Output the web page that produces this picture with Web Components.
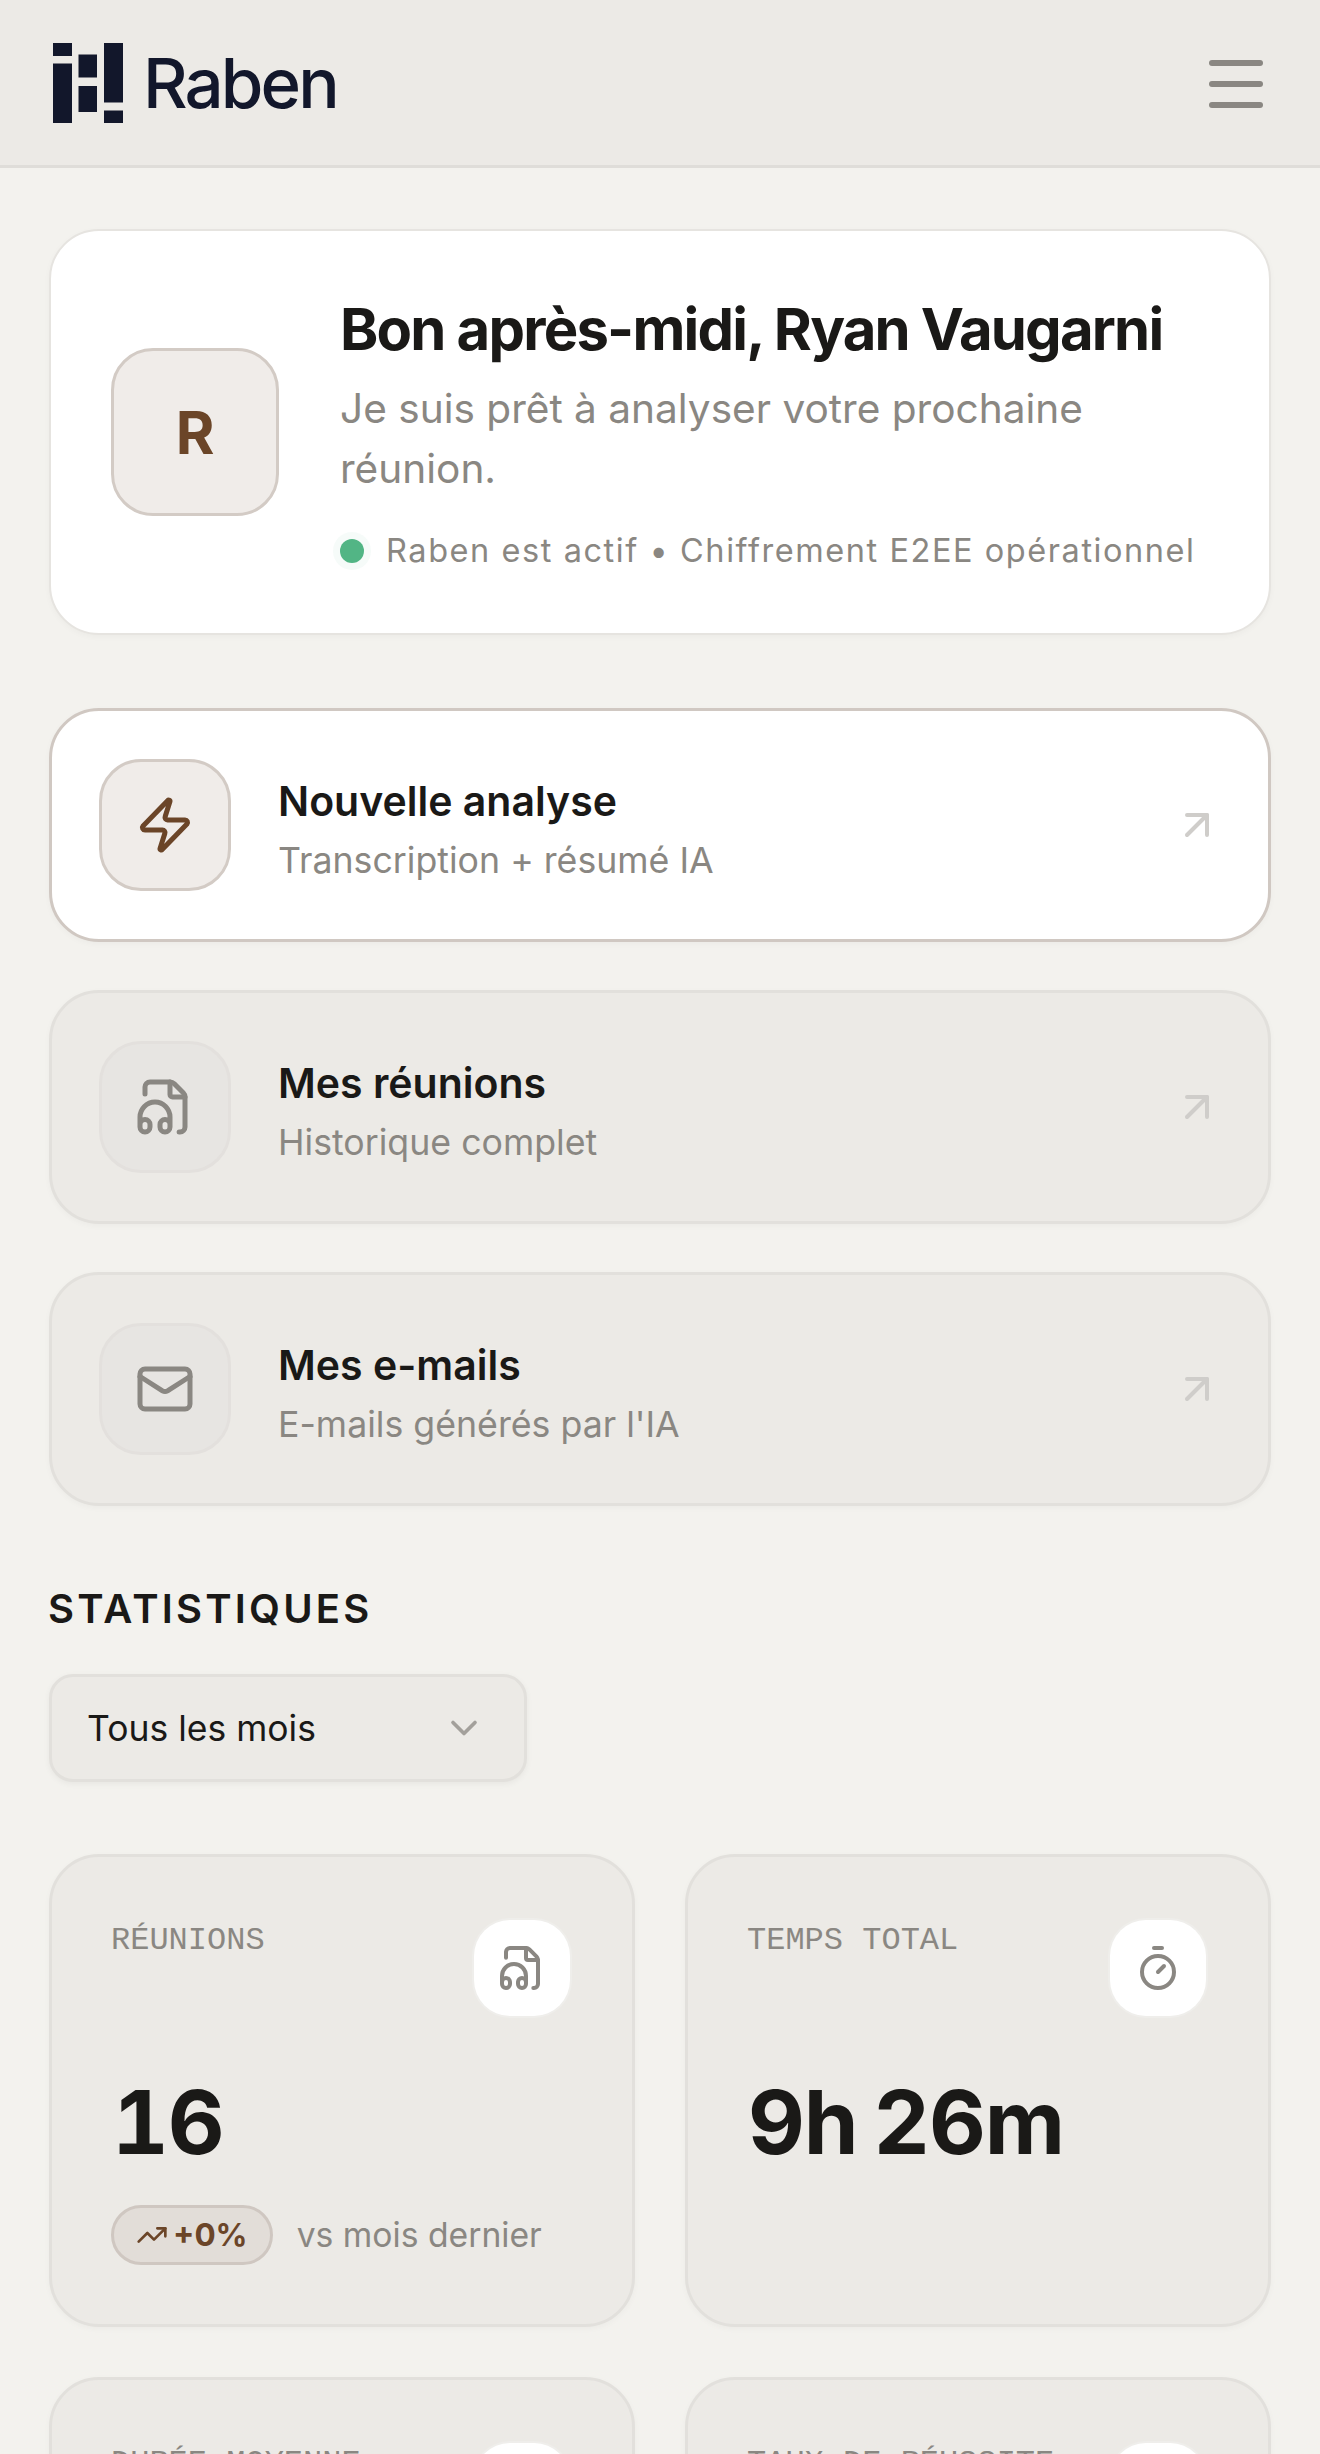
<!DOCTYPE html>
<html lang="fr">
<head>
<meta charset="utf-8">
<title>Raben</title>
<style>
html,body{margin:0;padding:0;height:2454px;overflow:hidden;background:#F3F2EE}
body{font-family:Inter,"Noto Sans",sans-serif;color:#1A1917}
</style>
</head>
<body>
<raben-app>
  <raben-header></raben-header>
  <raben-main>
    <hero-card initial="R">
      <span slot="title">Bon après-midi, Ryan Vaugarni</span>
      <span slot="sub">Je suis prêt à analyser votre prochaine réunion.</span>
      <span slot="status">Raben est actif • Chiffrement E2EE opérationnel</span>
    </hero-card>
    <action-list>
      <action-card primary icon="zap"><span slot="title">Nouvelle analyse</span><span slot="sub">Transcription + résumé IA</span></action-card>
      <action-card icon="file"><span slot="title">Mes réunions</span><span slot="sub">Historique complet</span></action-card>
      <action-card icon="mail"><span slot="title">Mes e-mails</span><span slot="sub">E-mails générés par l'IA</span></action-card>
    </action-list>
    <stat-section>
      <span slot="heading">STATISTIQUES</span>
      <span slot="select">Tous les mois</span>
      <stat-card icon="file" label="RÉUNIONS" value="16" trend="+0%" note="vs mois dernier"></stat-card>
      <stat-card icon="timer" label="TEMPS TOTAL" value="9h 26m"></stat-card>
      <stat-card icon="timer" label="DURÉE MOYENNE"></stat-card>
      <stat-card icon="trend" label="TAUX DE RÉUSSITE"></stat-card>
    </stat-section>
  </raben-main>
</raben-app>
<script>
const ICONS={
  zap:'<path d="M4 14a1 1 0 0 1-.78-1.63l9.9-10.2a.5.5 0 0 1 .86.46l-1.92 6.02A1 1 0 0 0 13 10h7a1 1 0 0 1 .78 1.63l-9.9 10.2a.5.5 0 0 1-.86-.46l1.92-6.02A1 1 0 0 0 11 14z"/>',
  file:'<path d="M4 6.835V4a2 2 0 0 1 2-2h8a2.4 2.4 0 0 1 1.706.706l3.588 3.588A2.4 2.4 0 0 1 20 8v12a2 2 0 0 1-2 2h-.343"/><path d="M14 2v5a1 1 0 0 0 1 1h5"/><path d="M2 19a2 2 0 0 1 4 0v1a2 2 0 0 1-4 0v-4a6 6 0 0 1 12 0v4a2 2 0 0 1-4 0v-1a2 2 0 0 1 4 0"/>',
  mail:'<path d="m22 7-8.991 5.727a2 2 0 0 1-2.009 0L2 7"/><rect x="2" y="4" width="20" height="16" rx="2"/>',
  timer:'<line x1="10" x2="14" y1="2" y2="2"/><line x1="12" x2="15" y1="14" y2="11"/><circle cx="12" cy="14" r="8"/>',
  arrow:'<path d="M7 7h10v10"/><path d="M7 17 17 7"/>',
  chevron:'<path d="m6 9 6 6 6-6"/>',
  trend:'<path d="M16 7h6v6"/><path d="m22 7-8.5 8.5-5-5L2 17"/>'
};
const svg=(n,s)=>`<svg xmlns="http://www.w3.org/2000/svg" width="${s}" height="${s}" viewBox="0 0 24 24" fill="none" stroke="currentColor" stroke-width="2" stroke-linecap="round" stroke-linejoin="round">${ICONS[n]}</svg>`;
function def(name,html){
  customElements.define(name,class extends HTMLElement{
    constructor(){super();this.attachShadow({mode:'open'}).innerHTML=typeof html==='function'?html(this):html;}
  });
}
def('raben-app',`<style>:host{display:block;width:1320px;height:2454px;overflow:hidden}</style><slot></slot>`);
def('raben-header',`<style>
:host{display:flex;align-items:center;justify-content:space-between;box-sizing:border-box;height:168px;background:#ECEAE6;border-bottom:3px solid #DFDDD9;padding:0 57px 0 53px}
.logo{display:flex;align-items:center;gap:20px}
.mark{display:block}
.word{font:450 69px/80px Inter,sans-serif;color:#12172B;letter-spacing:-.042em}
.burger{display:flex;flex-direction:column;gap:15px;width:54px;margin-top:3px}
.burger i{display:block;height:6px;border-radius:3px;background:#8A8782}
</style>
<div class="logo">
<svg class="mark" width="70" height="80" viewBox="0 0 70 80" fill="#12172B"><rect x="0" y="0" width="19" height="13"/><rect x="0" y="20.500" width="19" height="59.500"/><rect x="25.500" y="11.500" width="18.500" height="23"/><rect x="25.500" y="43" width="18.500" height="26"/><rect x="51" y="0" width="19" height="59.500"/><rect x="51" y="67.500" width="19" height="12.500"/></svg>
<span class="word">Raben</span></div>
<div class="burger"><i></i><i></i><i></i></div>`);
def('raben-main',`<style>:host{display:block;padding:61px 49px 0}</style><slot></slot>`);
def('hero-card',el=>`<style>
:host{display:flex;align-items:center;gap:61px;background:#fff;border:2px solid #E6E4E0;border-radius:50px;padding:57px 60px 52px;box-shadow:0 2px 6px rgba(0,0,0,.03);box-sizing:border-box;height:406px}
.av{flex:none;box-sizing:border-box;width:168px;height:168px;margin-top:-5px;border-radius:42px;background:#F0ECE9;border:3px solid #D3CBC5;color:#6B4528;display:flex;align-items:center;justify-content:center;font:700 59px/1 Inter,sans-serif}
.body{min-width:0}
.t{font:700 58px/70px Inter,sans-serif;letter-spacing:-.031em;color:#1A1917;white-space:nowrap}
.s{font:400 40.6px/60px Inter,sans-serif;color:#8A8782;margin-top:14.500px}
.st{display:flex;align-items:center;gap:22px;margin-top:28.500px;font:400 32.500px/48px Inter,sans-serif;letter-spacing:.048em;color:#8A8782;white-space:nowrap}
.d{flex:none;width:24px;height:24px;border-radius:50%;background:#52B585;box-shadow:0 0 0 7px rgba(82,181,133,.05)}
</style>
<div class="av">${el.getAttribute('initial')}</div>
<div class="body"><div class="t"><slot name="title"></slot></div><div class="s"><slot name="sub"></slot></div><div class="st"><span class="d"></span><slot name="status"></slot></div></div>`);
def('action-list',`<style>:host{display:flex;flex-direction:column;gap:48px;margin-top:73px}</style><slot></slot>`);
def('action-card',el=>{const p=el.hasAttribute('primary');return `<style>
:host{display:flex;align-items:center;box-sizing:border-box;height:234px;border-radius:50px;padding:0 47px 0 47px;
 background:${p?'#fff':'#ECEAE6'};border:3px solid ${p?'#D0C8C2':'#E2E0DC'};box-shadow:0 2px 6px rgba(0,0,0,.03)}
.i{flex:none;box-sizing:border-box;width:132px;height:132px;border-radius:42px;display:flex;align-items:center;justify-content:center;
 background:${p?'#F0ECE9':'#E7E5E2'};border:3px solid ${p?'#D3CBC5':'#E3E0DD'};color:${p?'#6B4528':'#8A8782'}}
.x{flex:1;min-width:0;margin:10px 0 0 47px}
.t{font:600 41px/50px Inter,sans-serif;color:#1A1917}
.s{font:400 35.700px/50px Inter,sans-serif;color:#8A8782;margin-top:9px}
.a{flex:none;color:#CFCDCA;display:flex}
svg{display:block}
</style>
<div class="i">${svg(el.getAttribute('icon'),60)}</div>
<div class="x"><div class="t"><slot name="title"></slot></div><div class="s"><slot name="sub"></slot></div></div>
<div class="a">${svg('arrow',48)}</div>`});
def('stat-section',`<style>
:host{display:block;margin-top:79px}
h2{margin:0 0 0 -1px;font:600 40px/48px Inter,sans-serif;letter-spacing:.08em;color:#1A1917}
.sel{box-sizing:border-box;display:flex;align-items:center;justify-content:space-between;width:478px;height:108px;margin-top:41px;padding:2px 38px 0 35px;background:#ECEAE6;border:3px solid #E2E0DC;border-radius:24px;font:400 35.500px/1 Inter,sans-serif;color:#1A1917;box-shadow:0 2px 6px rgba(0,0,0,.05)}
.sel svg{display:block;color:#A3A09B;margin-top:-2px}
.grid{display:grid;grid-template-columns:1fr 1fr;gap:50px;margin-top:72px}
</style>
<h2><slot name="heading"></slot></h2>
<div class="sel"><slot name="select"></slot>${svg('chevron',44)}</div>
<div class="grid"><slot></slot></div>`);
def('stat-card',el=>{const v=el.getAttribute('value'),t=el.getAttribute('trend'),n=el.getAttribute('note');return `<style>
:host{display:block;box-sizing:border-box;height:473px;border-radius:50px;background:#ECEAE6;border:3px solid #E2E0DC;padding:63px 62px 0 59px;box-shadow:0 2px 6px rgba(0,0,0,.03)}
.h{display:flex;justify-content:space-between;align-items:flex-start}
.l{font:400 32px/36px "Liberation Mono",monospace;color:#8A8782;margin-top:2.500px}
.b{flex:none;width:96px;height:96px;border-radius:36px;background:#fff;box-shadow:0 0 0 2px #EFEEEB;display:flex;align-items:center;justify-content:center;color:#8A8782}
.v{font:700 88px/100px Inter,sans-serif;font-variant-numeric:tabular-nums;letter-spacing:-.012em;word-spacing:-7px;color:#1A1917;margin:56px 0 0 1px}
.r{display:flex;align-items:center;gap:24px;margin-top:33px}
.p{box-sizing:border-box;display:flex;align-items:center;gap:5px;height:60px;padding:0 22px;border-radius:30px;background:#E2DDD8;border:3px solid #CFC7C1;color:#6B4528;font:700 31.500px/1 Inter,sans-serif}
.n{font:400 33.700px/1 Inter,sans-serif;color:#8A8782}
svg{display:block}
</style>
<div class="h"><div class="l">${el.getAttribute('label')}</div><div class="b">${svg(el.getAttribute('icon'),48)}</div></div>
${v?`<div class="v">${v}</div>`:''}
${t?`<div class="r"><div class="p">${svg('trend',32)}<span>${t}</span></div><div class="n">${n}</div></div>`:''}`});
</script>
</body>
</html>
